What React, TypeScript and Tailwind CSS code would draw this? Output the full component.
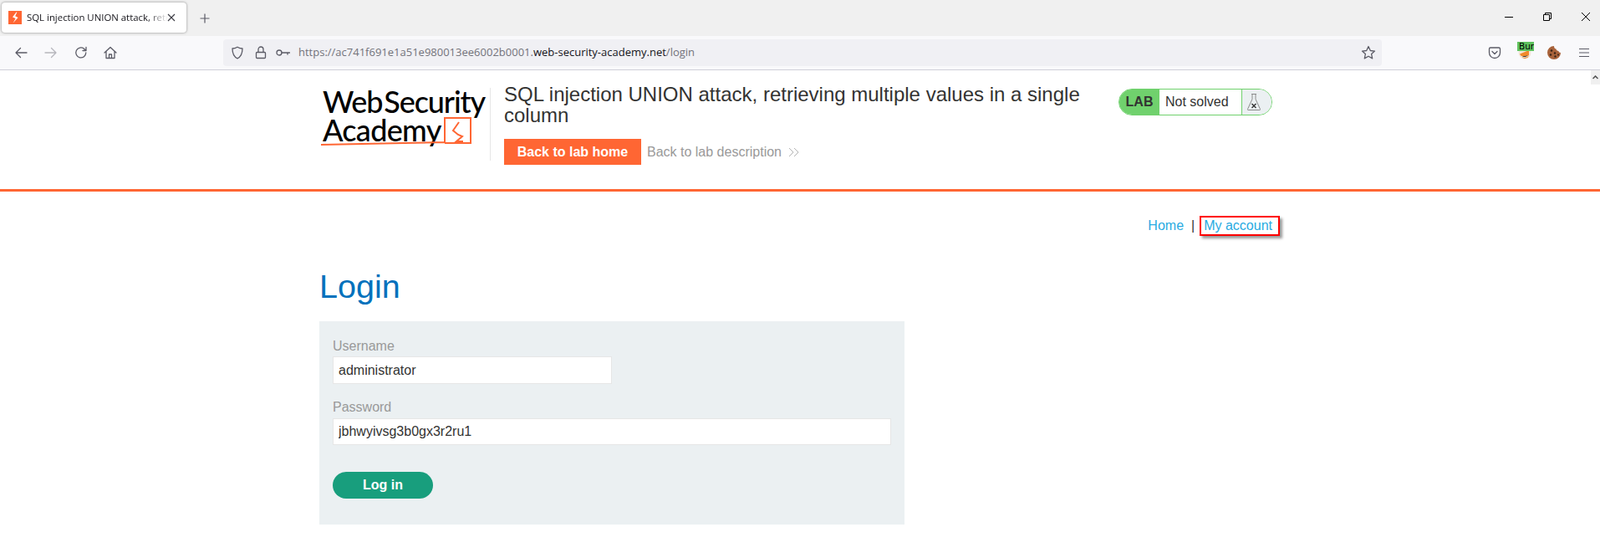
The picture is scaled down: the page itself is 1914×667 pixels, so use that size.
import React from "react";

const Ico = ({ w = 16, h = 16, children, className = "" }: { w?: number; h?: number; children: React.ReactNode; className?: string }) => (
  <svg width={w} height={h} viewBox={`0 0 ${w} ${h}`} fill="none" className={className}>
    {children}
  </svg>
);

const stroke = { stroke: "#5b5b66", strokeWidth: 1.3, strokeLinecap: "round" as const, strokeLinejoin: "round" as const };

function Favicon() {
  return (
    <svg width="16" height="16" viewBox="0 0 16 16" className="shrink-0">
      <rect width="16" height="16" fill="#ff6633" />
      <path d="M9.5 1.5 5 7.5l3.6 1.6L5.6 14.5l6-6.6-3.4-1.6 2.2-4.8z" fill="#fff" />
    </svg>
  );
}

function TabStrip() {
  return (
    <div className="flex h-[43px] items-start bg-[#f0f0f0] pl-[2px] pt-[3px]">
      <div className="flex h-[36px] w-[221px] items-center rounded-[4px] bg-white pl-[8px] shadow-[0_0_3px_rgba(0,0,0,0.45)]">
        <Favicon />
        <span className="ml-[6px] w-[169px] overflow-hidden whitespace-nowrap text-[11.4px] text-[#15141a] [font-family:'Open_Sans',sans-serif] [mask-image:linear-gradient(to_right,#000_85%,transparent_100%)]">
          SQL injection UNION attack, retrieving multiple
        </span>
        <Ico w={10} h={10} className="ml-[-1px]">
          <path d="M1 1l8 8M9 1l-8 8" stroke="#3a3a42" strokeWidth="1.1" />
        </Ico>
      </div>
      <Ico w={12} h={12} className="ml-[16px] mt-[13px]">
        <path d="M6 .5v11M.5 6h11" stroke="#5b5b66" strokeWidth="1.2" />
      </Ico>
      <div className="ml-auto mt-[12px] flex items-center">
        <Ico w={10} h={10} className="mr-[36px]">
          <path d="M0 5.5h10" stroke="#000" strokeWidth="1" />
        </Ico>
        <Ico w={10} h={10} className="mr-[36px]">
          <path d="M.5 2.5h7v7h-7zM2.5 2.5v-2h7v7h-2" stroke="#000" strokeWidth="1" />
        </Ico>
        <Ico w={10} h={10} className="mr-[12px]">
          <path d="M0 0l10 10M10 0L0 10" stroke="#000" strokeWidth="1" />
        </Ico>
      </div>
    </div>
  );
}

function Toolbar() {
  return (
    <div className="flex h-[41px] items-center border-b border-[#cfcfd8] bg-[#f9f9fb] pb-[1px]">
      <div className="ml-[17px] flex w-[250px] items-center">
        <Ico className="w-[16px]">
          <path d="M15 8H2M7.5 2.5 2 8l5.5 5.5" {...stroke} />
        </Ico>
        <Ico className="ml-[20px]">
          <path d="M1 8h13M8.500 2.500 14 8l-5.500 5.500" {...stroke} stroke="#b6b6bc" />
        </Ico>
        <Ico className="ml-[20px]">
          <path d="M13.800 8A6 6 0 1 1 11.500 3.200L14 5.500M14 1.500v4h-4" {...stroke} />
        </Ico>
        <Ico className="ml-[19px]">
          <path d="M1 8 8 1.500 15 8M3 6.500V14.500H13V6.500M6.500 14.500V10H9.500V14.500" {...stroke} />
        </Ico>
      </div>
      <div className="flex h-[32px] w-[1386px] items-center rounded-[4px] bg-[#f0f0f4]">
        <Ico className="ml-[9px]">
          <path d="M8 1.200c2 1.200 4 1.800 6 1.800 0 6-1.500 9.800-6 11.800C3.500 12.800 2 9 2 3c2 0 4-.6 6-1.800z" {...stroke} />
        </Ico>
        <Ico className="ml-[12px]">
          <path d="M3.500 7.500h9a1 1 0 0 1 1 1v5a1 1 0 0 1-1 1h-9a1 1 0 0 1-1-1v-5a1 1 0 0 1 1-1zM5 7.500V4a3 3 0 0 1 6 0v3.500" {...stroke} />
        </Ico>
        <Ico w={17} className="ml-[10px]">
          <circle cx="4" cy="8" r="3" {...stroke} />
          <path d="M7 8h9.500M14 8v2" {...stroke} />
        </Ico>
        <span className="ml-[10px] whitespace-nowrap text-[13px] text-[#73737b] [font-family:'Open_Sans',sans-serif]">
          https://ac741f691e1a51e980013ee6002b0001.<span className="text-[#15141a]">web-security-academy.net</span>/login
        </span>
        <Ico w={18} h={18} className="ml-auto mr-[7px]">
          <path d="M9 1.500l2.300 5 5.200.6-3.900 3.500 1.100 5.300L9 13.200l-4.700 2.700 1.100-5.300L1.500 7.100l5.200-.6z" {...stroke} />
        </Ico>
      </div>
      <Ico w={16} h={16} className="ml-[127px]">
        <path d="M1.500 3.500A1.500 1.500 0 0 1 3 2h10a1.500 1.500 0 0 1 1.500 1.500V8a6.500 6.500 0 0 1-13 0z" {...stroke} />
        <path d="M5 6.500 8 9.500l3-3" {...stroke} />
      </Ico>
      <div className="relative ml-[20px] h-[16px] w-[16px]">
        <svg width="16" height="16" viewBox="0 0 16 16">
          <circle cx="8" cy="8" r="7.500" fill="#f3e6da" />
          <path d="M2 9.500 13 5v6.500a5 5 0 0 1-9 1z" fill="#f08a2c" />
          <path d="M4 12.500c3 1.500 6 1 8.500-1" stroke="#fff" strokeWidth="1" />
        </svg>
        <span className="absolute left-[-1px] top-[-5px] h-[11px] w-[20px] overflow-hidden bg-[#5fc25f] pl-[2px] text-[10.5px] leading-[11px] text-black [font-family:'DejaVu_Sans',sans-serif]">
          Burp
        </span>
      </div>
      <svg width="16" height="16" viewBox="0 0 16 16" className="ml-[19px]">
        <path d="M8 0a8 8 0 1 0 8 8c-1.500 0-2.500-1-2.500-2C12 6 10.500 5 10.500 3.500 9 3.500 8 2 8 0z" fill="#a8623a" />
        <circle cx="5" cy="5.500" r="1.300" fill="#3a2416" />
        <circle cx="4" cy="10.500" r="1.200" fill="#3a2416" />
        <circle cx="9" cy="8.500" r="1.200" fill="#3a2416" />
        <circle cx="9.500" cy="12.500" r="1.200" fill="#3a2416" />
        <circle cx="13" cy="10.500" r="1" fill="#3a2416" />
      </svg>
      <Ico w={12} h={12} className="ml-[22px]">
        <path d="M0 1.500h12M0 6h12M0 10.500h12" stroke="#5b5b66" strokeWidth="1.200" />
      </Ico>
    </div>
  );
}

function Logo() {
  return (
    <div className="relative h-[74px] w-[202px] shrink-0 pl-[3px] text-black [font-family:Lato,sans-serif]">
      <div className="-mt-[1px] text-[36px] font-medium leading-[34px] tracking-[-1.1px] [word-spacing:-6px] whitespace-nowrap">Web Security</div>
      <div className="text-[36px] font-medium leading-[35px] tracking-[-0.7px] whitespace-nowrap">Academy</div>
      <svg width="190" height="44" viewBox="0 0 190 44" fill="none" className="absolute left-0 top-[32px]">
        <path d="M1 36C50 35 100 34 149 33V4H180V34H149" stroke="#ff6633" strokeWidth="2" />
        <path d="M166 9 159 19l6 5 5 2-7 6 8 0" stroke="#ff6633" strokeWidth="2" />
      </svg>
    </div>
  );
}

function Flask() {
  return (
    <svg width="18" height="24" viewBox="0 0 18 24" fill="none">
      <path d="M6 2.500h6M7 2.500v6L1.500 20.500c-.3.600 0 1 .6 1h13.800c.6 0 .9-.4.6-1L11 8.500v-6" stroke="#8b8b8b" strokeWidth="1" />
      <path d="M6.500 14l5 5M11.500 14l-5 5" stroke="#333" strokeWidth="1.400" />
    </svg>
  );
}

function Header() {
  return (
    <header className="h-[145px] border-b-[3px] border-[#ff6633]">
      <div className="mx-auto flex w-[1150px] pt-[21px]">
        <div className="ml-[1px] flex h-[87px] w-[204px] shrink-0 items-start border-r border-[#e6e6e6]">
          <Logo />
        </div>
        <div className="-mt-[5px] ml-[16px] w-[720px] shrink-0">
          <h2 className="text-[24px] leading-[25px] text-[#333332]">
            SQL injection UNION attack, retrieving multiple values in a single column
          </h2>
          <div className="mt-[16px] flex items-center">
            <a className="flex h-[31px] w-[164px] items-center justify-center bg-[#ff6633] text-[16px] font-bold text-white">Back to lab home</a>
            <a className="ml-[7px] text-[16px] text-[#999]">Back to lab description</a>
            <svg width="13" height="12" viewBox="0 0 13 12" fill="none" className="ml-[8px]">
              <path d="M1 1l5 5-5 5M7 1l5 5-5 5" stroke="#b3b3b3" strokeWidth="1" />
            </svg>
          </div>
        </div>
        <div className="ml-[15px] mt-[1px] flex h-[32px] w-[184px] shrink-0 overflow-hidden rounded-[16px] border border-[#70d16d] text-[16px]">
          <div className="flex w-[48px] items-center justify-center bg-[#70d16d] font-bold text-[#333332]">LAB</div>
          <div className="flex w-[98px] items-center pl-[7px] text-[#333332]">Not solved</div>
          <div className="flex flex-1 items-center border-l border-[#70d16d] bg-[#ebf0f2] pl-[5px]">
            <Flask />
          </div>
        </div>
      </div>
    </header>
  );
}

function LoginPanel() {
  return (
    <div className="mt-[19px] h-[243px] w-[700px] bg-[#ebf0f2] px-[16px] pt-[20px]">
      <label className="block text-[16px] leading-[20px] text-[#999]">Username</label>
      <input
        readOnly
        value="administrator"
        className="mt-[2px] block h-[33px] w-[334px] border border-[#e6e6e6] bg-white px-[6px] text-[16px] text-[#333332]"
      />
      <label className="mt-[18px] block text-[16px] leading-[20px] text-[#999]">Password</label>
      <input
        readOnly
        value="jbhwyivsg3b0gx3r2ru1"
        className="mt-[3px] block h-[32px] w-[668px] border border-[#e6e6e6] bg-white px-[6px] text-[16px] text-[#333332]"
      />
      <button className="mt-[32px] block h-[32px] w-[120px] rounded-[16px] bg-[#189e7d] text-[16px] font-bold text-white">Log in</button>
    </div>
  );
}

export default function App() {
  return (
    <div className="relative h-[667px] overflow-hidden bg-white [font-family:'Liberation_Sans',Arial,sans-serif]">
      <TabStrip />
      <Toolbar />
      <Header />
      <main className="mx-auto w-[1150px]">
        <nav className="mt-[29px] flex h-[24px] items-center justify-end text-[16px] text-[#29abe2]">
          <a>Home</a>
          <span className="ml-[9px] mr-[6px] text-[#333332]">|</span>
          <a className="mr-[1px] h-[24px] border-[2px] border-[#ff0000] pl-[3px] pr-[7px] leading-[19px] shadow-[3px_3px_3px_rgba(0,0,0,0.4)]">My account</a>
        </nav>
        <h1 className="mt-[37px] text-[39.5px] leading-[46px] text-[#0071bc]">Login</h1>
        <LoginPanel />
      </main>
      <div className="absolute right-0 top-[84px] flex h-[17px] w-[11px] items-center justify-center bg-[#f0f0f0]">
        <svg width="7" height="5" viewBox="0 0 7 5" fill="none">
          <path d="M.5 4 3.500 1l3 3" stroke="#505050" strokeWidth="1.500" />
        </svg>
      </div>
    </div>
  );
}
